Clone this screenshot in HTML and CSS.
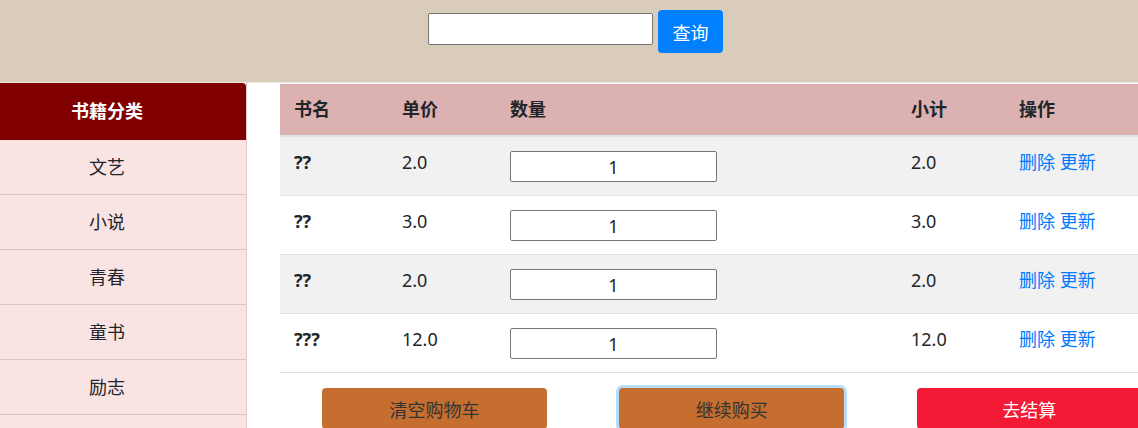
FILE: index.html
```html
<!DOCTYPE html>
<html lang="zh-CN">
<head>
    <meta charset="UTF-8">
    <meta name="viewport" content="width=device-width, initial-scale=1.0">
    <title>购物车</title>
    <link rel="stylesheet" href="styles.css">
</head>
<body>
    <div class="search-bar">
        <input type="text" class="search-input">
        <button class="search-btn">查询</button>
    </div>

    <div class="main">
        <div class="sidebar">
            <div class="sidebar-title">书籍分类</div>
            <ul class="category-list">
                <li>文艺</li>
                <li>小说</li>
                <li>青春</li>
                <li>童书</li>
                <li>励志</li>
            </ul>
        </div>

        <div class="cart">
            <table class="cart-table">
                <thead>
                    <tr>
                        <th class="col-name">书名</th>
                        <th class="col-price">单价</th>
                        <th class="col-qty">数量</th>
                        <th class="col-sum">小计</th>
                        <th class="col-op">操作</th>
                    </tr>
                </thead>
                <tbody>
                    <tr>
                        <td class="book-name">??</td>
                        <td>2.0</td>
                        <td><input type="text" class="qty-input" value="1"></td>
                        <td>2.0</td>
                        <td><a href="#">删除</a> <a href="#">更新</a></td>
                    </tr>
                    <tr>
                        <td class="book-name">??</td>
                        <td>3.0</td>
                        <td><input type="text" class="qty-input" value="1"></td>
                        <td>3.0</td>
                        <td><a href="#">删除</a> <a href="#">更新</a></td>
                    </tr>
                    <tr>
                        <td class="book-name">??</td>
                        <td>2.0</td>
                        <td><input type="text" class="qty-input" value="1"></td>
                        <td>2.0</td>
                        <td><a href="#">删除</a> <a href="#">更新</a></td>
                    </tr>
                    <tr>
                        <td class="book-name">???</td>
                        <td>12.0</td>
                        <td><input type="text" class="qty-input" value="1"></td>
                        <td>12.0</td>
                        <td><a href="#">删除</a> <a href="#">更新</a></td>
                    </tr>
                </tbody>
            </table>

            <div class="cart-actions">
                <div class="action-cell"><button class="btn btn-orange">清空购物车</button></div>
                <div class="action-cell"><button class="btn btn-orange focused">继续购买</button></div>
                <div class="action-cell"><button class="btn btn-red">去结算</button></div>
            </div>
        </div>
    </div>
</body>
</html>
```

FILE: styles.css
```css
body {
    margin: 0;
    font-family: "Noto Sans", "Noto Sans CJK SC", sans-serif;
    font-size: 18px;
    line-height: 1.5;
    color: #212529;
    background-color: #fff;
    overflow: hidden;
}
.search-bar {
    height: 83px;
    background-color: #d9ccbb;
    border-bottom: 1px solid #efe9e2;
    display: flex;
    justify-content: center;
    align-items: flex-start;
    padding-left: 13px;
    box-sizing: border-box;
}
.search-input {
    width: 225px;
    height: 32px;
    margin-top: 13px;
    box-sizing: border-box;
    border: 1px solid #767676;
    border-radius: 2px;
    background: #fff;
}
.search-btn {
    margin-top: 10px;
    margin-left: 5px;
    width: 65px;
    height: 43px;
    border: none;
    border-radius: 4px;
    background-color: #0080ff;
    color: #fff;
    font-family: inherit;
    font-size: 18px;
    padding: 0;
}
.main {
    display: flex;
    align-items: flex-start;
    gap: 33px;
}
.sidebar {
    width: 247px;
    min-height: 400px;
    flex-shrink: 0;
    background-color: #fae3e3;
    border-right: 1px solid #e2caca;
    box-sizing: border-box;
}
.sidebar-title {
    height: 57px;
    line-height: 57px;
    padding-right: 32px;
    text-align: center;
    background-color: #800000;
    color: #fff;
    font-weight: bold;
    border-top-right-radius: 4px;
}
.category-list {
    list-style: none;
    margin: 0;
    padding: 0;
}
.category-list li {
    height: 54px;
    line-height: 54px;
    padding-right: 32px;
    text-align: center;
    border-bottom: 1px solid #dcc5c5;
}
.cart {
    width: 892px;
    flex-shrink: 0;
    padding-top: 1px;
}
.cart-table {
    width: 892px;
    border-collapse: collapse;
    table-layout: fixed;
}
.cart-table th,
.cart-table td {
    padding: 12px 14px;
    text-align: left;
    vertical-align: top;
    white-space: nowrap;
}
.cart-table th {
    background-color: #dcb1b1;
    border-bottom: 2px solid #dee2e6;
    font-weight: bold;
}
.cart-table td {
    border-top: 1px solid #dee2e6;
}
.cart-table tbody tr:nth-child(odd) {
    background-color: #f1f1f1;
}
.cart-table tbody tr:last-child td {
    border-bottom: 1px solid #dee2e6;
}
.col-name, .col-price, .col-sum { width: 80px; }
.col-qty { width: 373px; }
.book-name {
    font-weight: bold;
}
.qty-input {
    display: block;
    width: 207px;
    height: 31px;
    margin: 2px 0 1px;
    box-sizing: border-box;
    border: 1px solid #767676;
    border-radius: 2px;
    text-align: center;
    font-family: inherit;
    font-size: 18px;
    line-height: 1;
    color: #212529;
    background: #fff;
    padding: 0;
}
.cart-table a {
    color: #007bff;
    text-decoration: none;
}
.cart-actions {
    display: flex;
    margin-top: 15px;
}
.action-cell {
    flex: 1;
    padding-left: 42px;
}
.btn {
    width: 225px;
    height: 41px;
    border: none;
    border-radius: 4px;
    font-family: inherit;
    font-size: 18px;
    padding: 0;
}
.btn-orange {
    background-color: #c66e30;
    color: #333;
}
.btn-red {
    background-color: #f31a35;
    color: #fff;
}
.focused {
    box-shadow: 0 0 0 3px #b8dcfb;
}
```
